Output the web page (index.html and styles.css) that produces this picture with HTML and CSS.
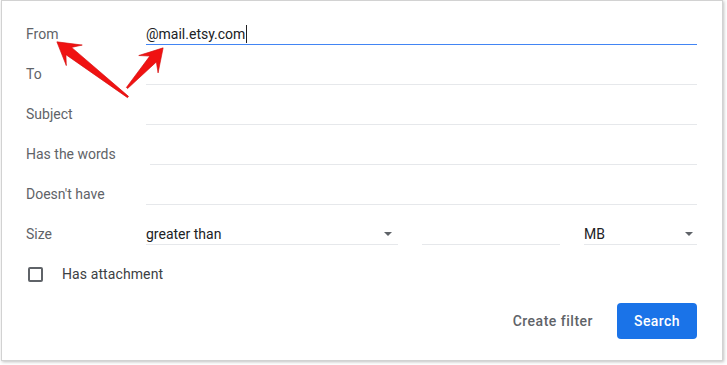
FILE: index.html
```html
<!DOCTYPE html>
<html lang="en">
<head>
    <meta charset="UTF-8">
    <title>Search options</title>
    <link rel="stylesheet" href="styles.css">
</head>
<body>
    <div class="dialog">
        <div class="row">
            <span class="label">From</span>
            <div class="field field-active"><span>@mail.etsy.com</span><span class="caret"></span></div>
        </div>
        <div class="row">
            <span class="label">To</span>
            <div class="field"></div>
        </div>
        <div class="row">
            <span class="label">Subject</span>
            <div class="field"></div>
        </div>
        <div class="row">
            <span class="label">Has the words</span>
            <div class="field field-shift"></div>
        </div>
        <div class="row">
            <span class="label">Doesn't have</span>
            <div class="field"></div>
        </div>
        <div class="row">
            <span class="label">Size</span>
            <div class="sizes">
                <div class="select select-op">greater than <i class="caret-down"></i></div>
                <div class="field field-num"></div>
                <div class="select select-unit">MB <i class="caret-down"></i></div>
            </div>
        </div>
        <label class="row check-row">
            <span class="checkbox"></span>
            Has attachment
        </label>
        <div class="actions">
            <button class="btn-text">Create filter</button>
            <button class="btn-search">Search</button>
        </div>
    </div>

    <!-- annotation arrows drawn over the dialog -->
    <svg class="arrows" width="727" height="365" viewBox="0 0 727 365">
        <polygon transform="translate(128 97) rotate(217.8)"
                 points="0,-0.8 75,-4.6 68,-13 90,0 68,13 75,4.6 0,0.8" />
        <polygon transform="translate(127 88) rotate(-48)"
                 points="0,-0.8 39,-4.4 32,-13 54,0 32,13 39,4.4 0,0.8" />
    </svg>
</body>
</html>
```

FILE: styles.css
```css
body {
    margin: 0;
    position: relative;
    width: 727px;
    height: 365px;
    overflow: hidden;
    background: #fff;
    font-family: Roboto, 'Liberation Sans', Arial, sans-serif;
}

.dialog {
    box-sizing: border-box;
    width: 722px;
    height: 361px;
    margin-left: 1px;
    padding: 13px 25px 0 24px;
    background: #fff;
    border: 1px solid #d2d2d2;
    box-shadow: 1px 1px 3px rgba(0,0,0,0.25);
}

.row {
    display: flex;
    align-items: center;
    height: 40px;
}

.label {
    flex: none;
    width: 120px;
    font-size: 14px;
    line-height: 20px;
    color: #5f6368;
}

.field {
    flex: 1;
    display: flex;
    align-items: center;
    height: 20px;
    font-size: 14px;
    line-height: 20px;
    color: #202124;
    border-bottom: 1px solid #e6e8eb;
}

.field-active {
    border-bottom-color: #4285f4;
}

.field-shift {
    margin-left: 4px;
}

.caret {
    width: 1px;
    height: 18px;
    margin-left: 1px;
    background: #202124;
}

.sizes {
    flex: 1;
    display: flex;
    gap: 24px;
}

.select {
    box-sizing: border-box;
    display: flex;
    justify-content: space-between;
    align-items: center;
    height: 21px;
    padding-right: 6px;
    font-size: 14px;
    line-height: 20px;
    color: #202124;
    border-bottom: 1px solid #e6e8eb;
}

.select-op {
    width: 252px;
}

.select-unit {
    width: 113px;
    padding-right: 4px;
}

.field-num {
    flex: none;
    width: 138px;
}

.caret-down {
    width: 0;
    height: 0;
    border-left: 4px solid transparent;
    border-right: 4px solid transparent;
    border-top: 4px solid #5f6368;
}

.check-row {
    font-size: 14px;
    color: #3c4043;
    letter-spacing: 0.1px;
}

.checkbox {
    box-sizing: border-box;
    width: 15px;
    height: 15px;
    margin: 1px 19px 0 2px;
    border: 2px solid #5f6368;
    border-radius: 2px;
}

.actions {
    display: flex;
    justify-content: flex-end;
    align-items: center;
    gap: 24px;
    margin-top: 9px;
}

.btn-text {
    padding: 0;
    border: none;
    background: none;
    font-family: inherit;
    font-size: 14px;
    font-weight: 500;
    letter-spacing: 0.5px;
    color: #5f6368;
}

.btn-search {
    width: 80px;
    height: 36px;
    border: none;
    border-radius: 4px;
    background: #1a73e8;
    color: #fff;
    font-family: inherit;
    font-size: 14px;
    font-weight: 500;
    letter-spacing: 0.4px;
}

.arrows {
    position: absolute;
    top: 0;
    left: 0;
    pointer-events: none;
    fill: #f01212;
    stroke: #d40c0c;
    stroke-width: 0.6;
    stroke-linejoin: round;
}
```
